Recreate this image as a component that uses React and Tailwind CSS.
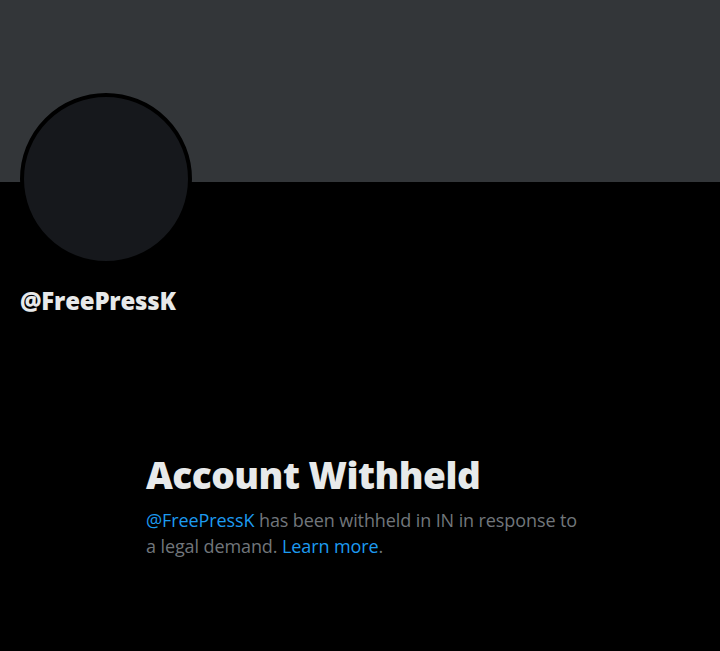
export default function App() {
  return (
    <div className="w-[720px] h-[651px] bg-black overflow-hidden" style={{ fontFamily: '"Open Sans", "Noto Sans", sans-serif' }}>
      <div className="h-[182px] bg-[#333639]" />
      <div className="px-[20px]">
        <div className="-mt-[89px] w-[172px] h-[172px] rounded-full border-[4px] border-black bg-[#16181c]" />
        <div className="mt-[20px] text-[24px] leading-[32px] font-extrabold text-[#e7e9ea] tracking-[-0.2px]">@FreePressK</div>
      </div>
      <div className="pl-[146px] mt-[136px] w-[640px]">
        <div className="text-[37px] leading-[44px] font-extrabold text-[#e7e9ea] tracking-[-0.5px]">Account Withheld</div>
        <p className="mt-[10px] w-[445px] text-[18px] leading-[26px] text-[#71767b] tracking-[-0.1px]">
          <span className="text-[#1d9bf0]">@FreePressK</span> has been withheld in IN in response to a legal demand.{" "}
          <span className="text-[#1d9bf0]">Learn more</span>.
        </p>
      </div>
    </div>
  );
}
